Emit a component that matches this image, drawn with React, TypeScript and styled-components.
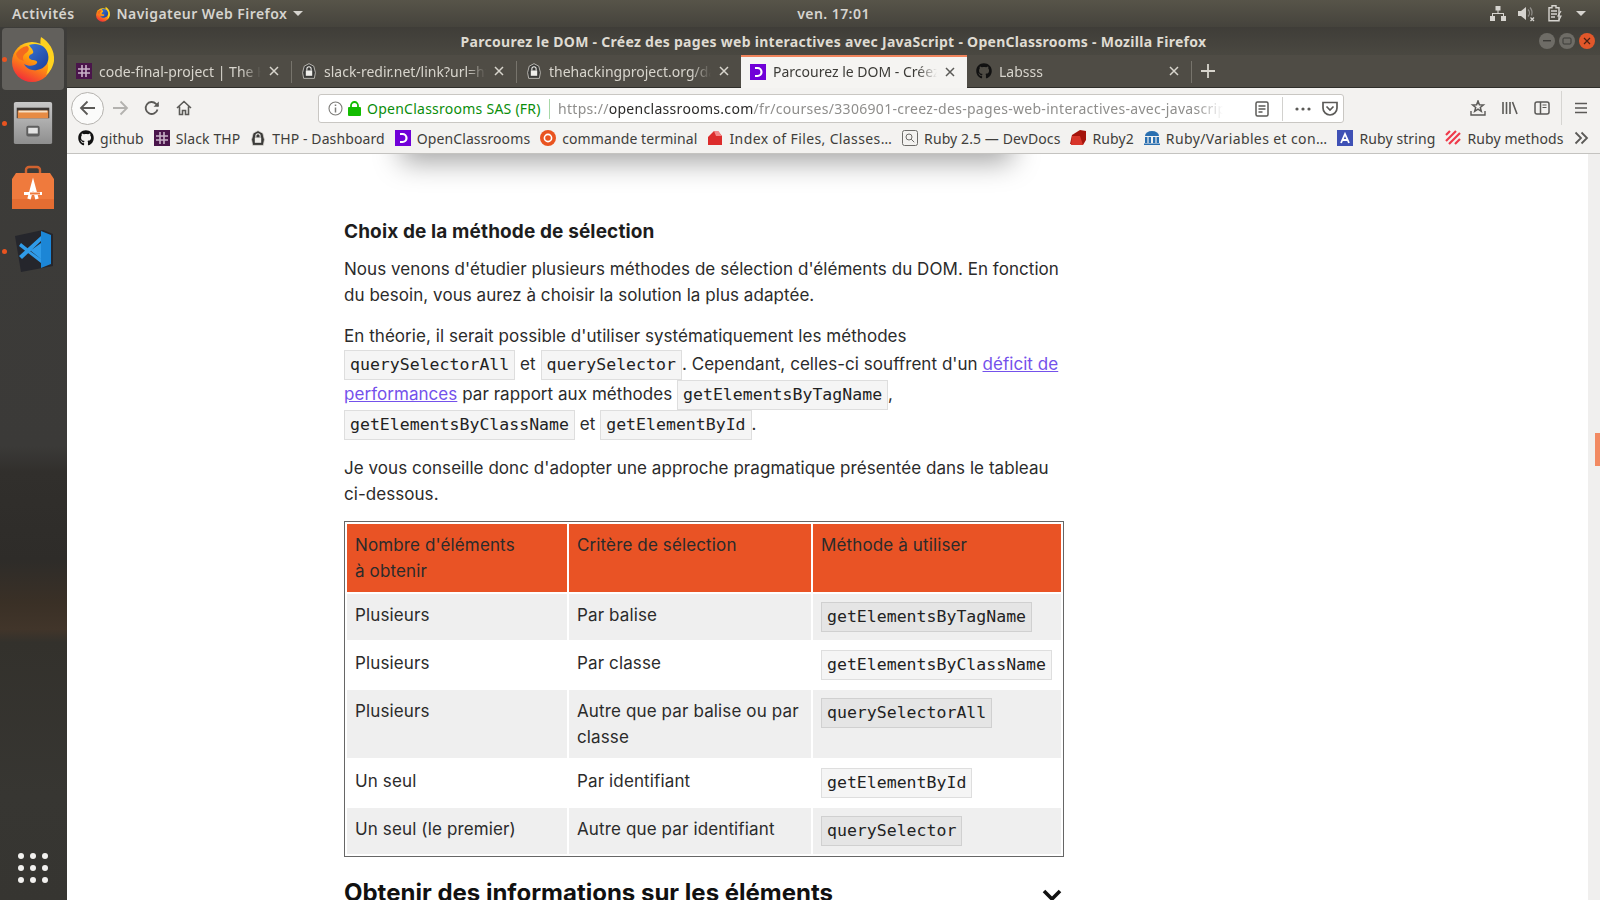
import React from 'react';
import styled, { createGlobalStyle } from 'styled-components';
import { FaGithub } from 'react-icons/fa';

const UI_FONT = '"Noto Sans", "Open Sans", sans-serif';
const PAGE_FONT = 'Inter, "Open Sans", sans-serif';
const MONO_FONT = '"DejaVu Sans Mono", "Liberation Mono", monospace';

const Global = createGlobalStyle`
  html, body { margin: 0; padding: 0; height: 100%; overflow: hidden; background: #fff; }
  #root { height: 100%; }
`;

const Screen = styled.div`
  width: 1600px;
  height: 900px;
  display: flex;
  flex-direction: column;
  overflow: hidden;
  font-family: ${UI_FONT};
`;

const TopBar = styled.div`
  height: 27px;
  flex: none;
  display: flex;
  align-items: center;
  justify-content: space-between;
  position: relative;
  padding: 0 12px;
  background: linear-gradient(#575449, #45433c);
  color: #d6d4cf;
  font-size: 14px;
  font-weight: 600;
  letter-spacing: 0.45px;
`;

const TopLeft = styled.div`
  display: flex;
  align-items: center;
`;

const AppMenu = styled.div`
  display: flex;
  align-items: center;
  gap: 6px;
  margin-left: 20px;
`;

const Caret = styled.span`
  width: 0;
  height: 0;
  border-left: 5px solid transparent;
  border-right: 5px solid transparent;
  border-top: 5px solid #d6d4cf;
`;

const Clock = styled.div`
  position: absolute;
  left: 67px;
  right: 0;
  text-align: center;
  pointer-events: none;
`;

const Tray = styled.div`
  display: flex;
  align-items: center;
  gap: 12px;
  margin-right: 2px;
`;

const Body = styled.div`
  flex: 1;
  display: flex;
  min-height: 0;
`;

const Dock = styled.div`
  width: 67px;
  box-sizing: border-box;
  flex: none;
  display: flex;
  flex-direction: column;
  align-items: center;
  position: relative;
  padding: 1px 1px 0 0;
  background: linear-gradient(#3d3c39 0, #3b3a38 48%, #312f2c 51%, #2e2c29 61%, #3a3026 66%, #41352a 69%, #33312c 70.5%, #373632 88%, #363531 100%);
`;

const DockItem = styled.div<{ $active?: boolean }>`
  width: 62px;
  height: 62px;
  margin-bottom: 2px;
  border-radius: 4px;
  display: flex;
  align-items: center;
  justify-content: center;
  position: relative;
  background: ${(p) => (p.$active ? '#62605c' : 'transparent')};
`;

const DockDot = styled.span`
  position: absolute;
  left: 0;
  top: 50%;
  margin-top: -2.5px;
  width: 5px;
  height: 5px;
  border-radius: 50%;
  background: #e95420;
`;

const GridDots = styled.div`
  margin-top: auto;
  margin-bottom: 17px;
  display: grid;
  grid-template-columns: repeat(3, 6px);
  gap: 6px;
`;

const GridDot = styled.span`
  width: 6px;
  height: 6px;
  border-radius: 50%;
  background: #f2f1ef;
`;

const Browser = styled.div`
  flex: 1;
  min-width: 0;
  display: flex;
  flex-direction: column;
  position: relative;
`;

const TitleBar = styled.div`
  height: 28px;
  flex: none;
  position: relative;
  display: flex;
  align-items: center;
  justify-content: center;
  background: linear-gradient(#3f3d38, #4a4841);
  color: #dfdbd2;
  font-size: 14px;
  font-weight: 700;
  letter-spacing: 0.28px;
`;

const WindowButtons = styled.div`
  position: absolute;
  right: 5px;
  top: 6px;
  display: flex;
  gap: 4px;
`;

const WinButton = styled.span<{ $close?: boolean }>`
  width: 16px;
  height: 16px;
  border-radius: 50%;
  display: flex;
  align-items: center;
  justify-content: center;
  background: ${(p) => (p.$close ? '#e2572a' : '#6e6c66')};
`;

const TabStrip = styled.div`
  height: 32px;
  flex: none;
  display: flex;
  align-items: stretch;
  background: #4f4c45;
  border-bottom: 1px solid #2f2e2a;
`;

const Tab = styled.div<{ $active?: boolean; $w: number }>`
  width: ${(p) => p.$w}px;
  flex: none;
  box-sizing: border-box;
  display: flex;
  align-items: center;
  gap: 7px;
  padding: 0 11px 2px 9px;
  position: relative;
  color: ${(p) => (p.$active ? '#3c3b37' : '#d8d5cd')};
  background: ${(p) => (p.$active ? '#f5f4f2' : 'transparent')};
  border-top: ${(p) => (p.$active ? '2px solid #f0845c' : '2px solid transparent')};
  font-size: 14px;
  margin-bottom: ${(p) => (p.$active ? '-1px' : '0')};
`;

const TabLabel = styled.span`
  flex: 1;
  min-width: 0;
  white-space: nowrap;
  overflow: hidden;
  -webkit-mask-image: linear-gradient(90deg, #000 88%, transparent 100%);
  mask-image: linear-gradient(90deg, #000 88%, transparent 100%);
`;

const TabSep = styled.span`
  width: 1px;
  margin: 6px 0 4px;
  flex: none;
  background: #77746c;
`;

const PlusButton = styled.span`
  width: 32px;
  display: flex;
  align-items: center;
  justify-content: center;
`;

const NavBar = styled.div`
  height: 35px;
  flex: none;
  box-sizing: border-box;
  display: flex;
  align-items: center;
  background: #f3f2f0;
  padding: 5px 0 0 4px;
  position: relative;
  z-index: 3;
`;

const BackCircle = styled.span`
  width: 33px;
  height: 33px;
  box-sizing: border-box;
  border: 1px solid #b5b3af;
  border-radius: 50%;
  background: #fbfbfa;
  display: flex;
  align-items: center;
  justify-content: center;
  flex: none;
`;

const NavIcon = styled.span`
  width: 32px;
  flex: none;
  display: flex;
  align-items: center;
  justify-content: center;
`;

const UrlBar = styled.div`
  position: absolute;
  left: 251px;
  width: 1026px;
  top: 6px;
  height: 29px;
  box-sizing: border-box;
  border: 1px solid #c9c7c3;
  border-radius: 3px;
  background: #fff;
  display: flex;
  align-items: center;
  font-size: 14px;
  overflow: hidden;
`;

const Identity = styled.div`
  display: flex;
  align-items: center;
  gap: 6px;
  padding-left: 9px;
  flex: none;
  width: 230px;
  box-sizing: border-box;
  height: 100%;
  color: #0a8d0a;
  white-space: nowrap;
  letter-spacing: 0.25px;
`;

const IdentitySep = styled.span`
  width: 1px;
  height: 20px;
  flex: none;
  background: #a8d8a8;
  margin-right: 8px;
`;

const UrlText = styled.div`
  flex: 1;
  min-width: 0;
  margin-right: 32px;
  white-space: nowrap;
  overflow: hidden;
  color: #8f8e8c;
  letter-spacing: 0.3px;
  -webkit-mask-image: linear-gradient(90deg, #000 96%, transparent 100%);
  mask-image: linear-gradient(90deg, #000 96%, transparent 100%);
  b {
    font-weight: 400;
    color: #2b2a29;
  }
`;

const UrlActions = styled.div`
  flex: none;
  display: flex;
  align-items: center;
  height: 100%;
  padding: 0 5px 0 0;
`;

const UrlDivider = styled.span`
  width: 1px;
  height: 24px;
  background: #d2d1ce;
  margin: 0 12px 0 13px;
`;

const PocketGap = styled.span`
  width: 11px;
`;

const ToolGroup = styled.div`
  margin-left: auto;
  padding-right: 3px;
  display: flex;
  align-items: center;
  height: 100%;
`;

const ToolDivider = styled.span`
  width: 1px;
  height: 34px;
  background: #d6d5d2;
  margin: 0 3px;
`;

const Bookmarks = styled.div`
  height: 31px;
  flex: none;
  box-sizing: border-box;
  display: flex;
  align-items: center;
  background: #f3f2f0;
  border-bottom: 1px solid #c4c3c0;
  padding-left: 11px;
  font-size: 14px;
  letter-spacing: 0.1px;
  color: #3f3e3b;
  position: relative;
  z-index: 2;
`;

const Bookmark = styled.div<{ $wide?: boolean }>`
  display: flex;
  align-items: center;
  gap: 6px;
  margin-right: 10px;
  white-space: nowrap;
  letter-spacing: ${(p) => (p.$wide ? '0.38px' : 'inherit')};
`;

const Favicon = styled.span<{ $bg?: string; $round?: boolean }>`
  width: 16px;
  height: 16px;
  flex: none;
  display: flex;
  align-items: center;
  justify-content: center;
  background: ${(p) => p.$bg ?? 'transparent'};
  border-radius: ${(p) => (p.$round ? '50%' : '0')};
`;

const Overflow = styled.span`
  position: absolute;
  right: 11px;
  top: 7px;
`;

const PageArea = styled.div`
  flex: 1;
  min-height: 0;
  display: flex;
  position: relative;
  overflow: hidden;
  background: #fff;
`;

const ImageShadow = styled.div`
  position: absolute;
  left: 336px;
  width: 607px;
  top: -40px;
  height: 40px;
  box-shadow: 0 6px 28px 2px rgba(0, 0, 0, 0.36);
`;

const Content = styled.div`
  width: 720px;
  margin-left: 277px;
  flex: none;
  color: #2b2b2b;
  font-family: ${PAGE_FONT};
  font-size: 17px;
  letter-spacing: 0.05px;
  line-height: 26px;
  padding-top: 65px;
`;

const SubTitle = styled.h3`
  margin: 0 0 11px;
  font-size: 19px;
  letter-spacing: 0.12px;
  line-height: 26px;
  font-weight: 700;
  color: #1d1d1d;
`;

const Para = styled.p`
  margin: 0 0 14px;
`;

const CodePara = styled.p`
  margin: 15px 0;
  line-height: 26px;
`;

const FirstLine = styled.span`
  display: block;
  margin-bottom: 1px;
`;

const Code = styled.code`
  display: inline-block;
  font-family: ${MONO_FONT};
  font-size: 16.55px;
  letter-spacing: 0;
  line-height: 24px;
  padding: 2px 5px;
  border: 1px solid rgba(0, 0, 0, 0.09);
  background: rgba(0, 0, 0, 0.04);
  color: #222;
`;

const Link = styled.a`
  color: #7451eb;
  text-decoration: underline;
`;

const Table = styled.table`
  width: 100%;
  box-sizing: border-box;
  border: 1px solid #666;
  border-collapse: separate;
  border-spacing: 2px;
  table-layout: fixed;
  margin-top: 14px;
  letter-spacing: 0.13px;
`;

const HeadCell = styled.th`
  background: #e95325;
  color: #2b2b2b;
  font-weight: 400;
  text-align: left;
  vertical-align: top;
  padding: 8px 9px 8px 8px;
`;

const Row = styled.tr<{ $odd?: boolean }>`
  background: ${(p) => (p.$odd ? '#efefef' : '#fff')};
`;

const Cell = styled.td`
  vertical-align: top;
  padding: 8px 9px 8px 8px;
`;

const CodeCell = styled.td`
  vertical-align: top;
  padding: 8px 9px 8px 8px;
  white-space: nowrap;
  ${Code} {
    vertical-align: top;
  }
`;

const NextTitle = styled.div`
  display: flex;
  justify-content: space-between;
  align-items: center;
  margin-top: 23px;
  font-size: 24px;
  letter-spacing: 0;
  font-weight: 700;
  color: #111;
`;

const Chevron = styled.svg`
  flex: none;
  margin: 6px 2px 0 0;
`;

const ScrollTrack = styled.div`
  width: 12px;
  flex: none;
  margin-left: auto;
  position: relative;
  background: #f0efee;
`;

const ScrollThumb = styled.div`
  position: absolute;
  right: 0;
  top: 279px;
  width: 5px;
  height: 33px;
  background: #f28a62;
`;

const ic = '#5b5a57';

const SlackIcon = () => (
  <Favicon $bg="#4a154b">
    <svg width="12" height="12" viewBox="0 0 12 12" stroke="#c9b2c9" strokeWidth="1.6">
      <path d="M4 0v12M8 0v12M0 4h12M0 8h12" />
    </svg>
  </Favicon>
);

const LockGhost = () => (
  <Favicon>
    <svg width="16" height="16" viewBox="0 0 14 15">
      <path d="M7 .6 2.5 3 1 9l1 5.4h10L13 9l-1.5-6z" fill="#3a3a38" stroke="#d9d7d1" strokeWidth=".7" />
      <rect x="4" y="7" width="6" height="5" fill="#efeeea" />
      <path d="M5 7V5.5a2 2 0 0 1 4 0V7" fill="none" stroke="#efeeea" />
    </svg>
  </Favicon>
);

const OcIcon = () => (
  <Favicon $bg="#7000d8">
    <svg width="12" height="12" viewBox="0 0 12 12" fill="none">
      <path d="M3 2h2.5a4 4 0 0 1 0 8H3" stroke="#fff" strokeWidth="2.2" />
    </svg>
  </Favicon>
);

const CloseX = ({ color }: { color: string }) => (
  <svg width="12" height="12" viewBox="0 0 12 12" stroke={color} strokeWidth="1.5" style={{ flex: 'none' }}>
    <path d="M2 2l8 8M10 2l-8 8" />
  </svg>
);

const FirefoxLogo = ({ size }: { size: number }) => (
  <svg width={size} height={size} viewBox="0 0 48 48">
    <defs>
      <linearGradient id={`ffa${size}`} x1="0.7" y1="0" x2="0.2" y2="1">
        <stop offset="0" stopColor="#ffe226" />
        <stop offset="0.45" stopColor="#ff980e" />
        <stop offset="1" stopColor="#f0213f" />
      </linearGradient>
      <linearGradient id={`ffb${size}`} x1="0" y1="0" x2="1" y2="1">
        <stop offset="0" stopColor="#3d79d8" />
        <stop offset="1" stopColor="#1b3f9a" />
      </linearGradient>
    </defs>
    <circle cx="23" cy="27" r="20" fill={`url(#ffa${size})`} />
    <path d="M32 2c8 5 14 13 13 24-1 6-4 11-8 14 3-6 3-13-1-19-3-5-6-11-4-19z" fill="#ffd21f" />
    <path d="M20 10c8-3 17 0 19 9 2 8-3 15-11 16-6 1-11-2-13-6 5 3 11 2 13-1 1-2-2-3-5-3-3-1-4-3-2-5 2-1 4-2 3-4-1-3-3-4-4-6z" fill={`url(#ffb${size})`} />
    <path d="M7 19c2-4 6-7 11-8 3 2 2 5-1 7-3 2-4 5-2 8-4-1-7-3-8-7z" fill="#f46a1e" />
  </svg>
);

const FilesIcon = () => (
  <svg width="42" height="44" viewBox="0 0 42 46">
    <defs>
      <linearGradient id="cab" x1="0" y1="0" x2="0" y2="1">
        <stop offset="0" stopColor="#c8c8c8" />
        <stop offset="1" stopColor="#8e8e8e" />
      </linearGradient>
    </defs>
    <rect x="1" y="1" width="40" height="44" rx="2" fill="url(#cab)" />
    <rect x="4" y="7" width="34" height="11" fill="#3a3532" />
    <rect x="5" y="10" width="32" height="8" fill="#e78b44" />
    <rect x="6" y="10" width="30" height="2" fill="#f7e0c4" />
    <rect x="14" y="26" width="14" height="11" rx="2" fill="#5f5f5f" />
    <rect x="16" y="28" width="10" height="6" fill="#e4e4e4" />
  </svg>
);

const StoreIcon = () => (
  <svg width="42" height="44" viewBox="0 0 42 44">
    <path d="M14 9V5a3 3 0 0 1 3-3h8a3 3 0 0 1 3 3v4" fill="none" stroke="#d0622f" strokeWidth="2.4" />
    <path d="M4 8h34l4 6v30H0V14z" fill="#ef7a3d" />
    <rect x="0" y="34" width="42" height="10" fill="#e56d32" />
    <path d="M17 34l4-15 4 15" fill="none" stroke="#fff" strokeWidth="3.4" />
    <rect x="12" y="27" width="18" height="3" fill="#fff" />
    <rect x="18" y="27.5" width="10" height="2" fill="#ef7a3d" />
  </svg>
);

const VsCodeIcon = () => (
  <svg width="41" height="42" viewBox="0 0 41 42">
    <path d="M2 6 30 0l10 4v32l-32 6z" fill="#25262c" />
    <path d="M28 1l10 4v29l-10 4z" fill="#1c86d6" />
    <path d="M28 13 17 21l11 8zM8 13l20 16v4L6 16zM6 26l22-20v5L9 29z" fill="#2f9be8" />
  </svg>
);

const Tools = {
  back: (
    <svg width="18" height="18" viewBox="0 0 18 18" fill="none" stroke={ic} strokeWidth="1.8">
      <path d="M16 9H2M8.5 2.5 2 9l6.5 6.5" />
    </svg>
  ),
  forward: (
    <svg width="18" height="18" viewBox="0 0 18 18" fill="none" stroke="#b3b2af" strokeWidth="1.8">
      <path d="M2 9h14M9.5 2.5 16 9l-6.5 6.5" />
    </svg>
  ),
  reload: (
    <svg width="16" height="16" viewBox="0 0 16 16" fill="none" stroke={ic} strokeWidth="1.8">
      <path d="M13.5 9.5A6 6 0 1 1 12 3.8L14 6" />
      <path d="M14.8 1.5v5.2H9.6z" fill={ic} stroke="none" />
    </svg>
  ),
  home: (
    <svg width="16" height="16" viewBox="0 0 16 16" fill="none" stroke={ic} strokeWidth="1.6">
      <path d="M1 8 8 1.5 15 8M3.5 6.5V14.5h3v-4h3v4h3V6.5" />
    </svg>
  ),
  reader: (
    <svg width="14" height="16" viewBox="0 0 14 16" fill="none" stroke={ic} strokeWidth="1.5">
      <rect x="1" y="1" width="12" height="14" rx="1.5" />
      <path d="M3.5 5h7M3.5 8h7M3.5 11h4" />
    </svg>
  ),
  dots: (
    <svg width="16" height="4" viewBox="0 0 16 4" fill={ic}>
      <circle cx="2" cy="2" r="1.6" />
      <circle cx="8" cy="2" r="1.6" />
      <circle cx="14" cy="2" r="1.6" />
    </svg>
  ),
  pocket: (
    <svg width="16" height="15" viewBox="0 0 16 15" fill="none" stroke={ic} strokeWidth="1.7">
      <path d="M1 1.5h14v5.5a7 7 0 0 1-14 0z" />
      <path d="M4.5 5.5 8 9l3.5-3.5" />
    </svg>
  ),
  star: (
    <svg width="16" height="16" viewBox="0 0 16 16" fill="none" stroke={ic} strokeWidth="1.5">
      <path d="M8 1 9.4 4.8l4 .2-3.1 2.5 1 3.8L8 9.2l-3.3 2.1 1-3.8L2.6 5l4-.2z" />
      <path d="M1 11v4h14v-4" strokeWidth="1.4" />
    </svg>
  ),
  library: (
    <svg width="16" height="14" viewBox="0 0 16 14" fill="none" stroke={ic} strokeWidth="1.6">
      <path d="M1 1v12M4.5 1v12M8 1v12M10.5 1l4.5 12" />
    </svg>
  ),
  sidebar: (
    <svg width="16" height="14" viewBox="0 0 16 14" fill="none" stroke={ic} strokeWidth="1.5">
      <rect x="1" y="1" width="14" height="12" rx="2" />
      <path d="M6.5 1v12" />
      <path d="M8.5 4h4M8.5 6.5h4" strokeWidth="1" />
    </svg>
  ),
  menu: (
    <svg width="14" height="12" viewBox="0 0 14 12" stroke={ic} strokeWidth="1.7">
      <path d="M1 1.5h12M1 6h12M1 10.5h12" />
    </svg>
  ),
};

const App = () => {
  return (
    <Screen>
      <Global />
      <TopBar>
        <Clock>ven. 17:01</Clock>
        <TopLeft>
          <span>Activités</span>
          <AppMenu>
            <FirefoxLogo size={16} />
            <span>Navigateur Web Firefox</span>
            <Caret />
          </AppMenu>
        </TopLeft>
        <Tray>
          <svg width="16" height="15" viewBox="0 0 16 15" fill="#d6d4cf">
            <rect x="5.5" y="0" width="5" height="4.5" />
            <rect x="0" y="10" width="5" height="5" />
            <rect x="11" y="10" width="5" height="5" />
            <path d="M7.5 4h1v3h5.5v3h-1V8H3v2H2V7h5.5z" />
          </svg>
          <svg width="18" height="16" viewBox="0 0 18 16" fill="#d6d4cf">
            <path d="M0 5h3l5-4v13l-5-4H0z" />
            <path d="M10 3.5a5 5 0 0 1 0 7M12 1.5a8 8 0 0 1 1.5 8" fill="none" stroke="#8f8d88" strokeWidth="1.3" />
            <path d="M12.5 11.5l3.5 3.5M16 11.5l-3.5 3.5" stroke="#d6d4cf" strokeWidth="1.3" />
          </svg>
          <svg width="16" height="17" viewBox="0 0 16 17" fill="none" stroke="#d6d4cf" strokeWidth="1.4">
            <path d="M4 .8h4v2h3v13H1v-13h3z" fill="none" />
            <path d="M3 6h6M3 9h6M3 12h4" />
            <path d="M13 6l-3 5h3l-2 4" strokeWidth="1.2" />
          </svg>
          <Caret />
        </Tray>
      </TopBar>
      <Body>
        <Dock>
          <DockItem $active>
            <DockDot />
            <FirefoxLogo size={48} />
          </DockItem>
          <DockItem>
            <DockDot />
            <FilesIcon />
          </DockItem>
          <DockItem>
            <StoreIcon />
          </DockItem>
          <DockItem>
            <DockDot />
            <VsCodeIcon />
          </DockItem>
          <GridDots>
            {Array.from({ length: 9 }).map((_, i) => <GridDot key={i} />)}
          </GridDots>
        </Dock>
        <Browser>
          <TitleBar>
            <div>Parcourez le DOM - Créez des pages web interactives avec JavaScript - OpenClassrooms - Mozilla Firefox</div>
            <WindowButtons>
              <WinButton>
                <svg width="8" height="2" viewBox="0 0 8 2"><rect width="8" height="1.4" fill="#3b3a36" /></svg>
              </WinButton>
              <WinButton>
                <svg width="10" height="8" viewBox="0 0 10 8" fill="none" stroke="#3b3a36"><rect x="1" y="1" width="8" height="6" rx="1" /></svg>
              </WinButton>
              <WinButton $close>
                <svg width="8" height="8" viewBox="0 0 8 8" stroke="#4a2012" strokeWidth="1.2"><path d="M1 1l6 6M7 1 1 7" /></svg>
              </WinButton>
            </WindowButtons>
          </TitleBar>
          <TabStrip>
            <Tab $w={224}>
              <SlackIcon />
              <TabLabel>code-final-project | The Hacking</TabLabel>
              <CloseX color="#d8d5cd" />
            </Tab>
            <TabSep />
            <Tab $w={224}>
              <LockGhost />
              <TabLabel>slack-redir.net/link?url=https</TabLabel>
              <CloseX color="#d8d5cd" />
            </Tab>
            <TabSep />
            <Tab $w={224}>
              <LockGhost />
              <TabLabel>thehackingproject.org/dashboard</TabLabel>
              <CloseX color="#d8d5cd" />
            </Tab>
            <Tab $w={226} $active>
              <OcIcon />
              <TabLabel>Parcourez le DOM - Créez des pages</TabLabel>
              <CloseX color="#5b5a57" />
            </Tab>
            <Tab $w={224}>
              <FaGithub size={16} color="#111" style={{ flex: 'none' }} />
              <TabLabel>Labsss</TabLabel>
              <CloseX color="#d8d5cd" />
            </Tab>
            <TabSep />
            <PlusButton>
              <svg width="14" height="14" viewBox="0 0 14 14" stroke="#d8d5cd" strokeWidth="1.8"><path d="M7 0v14M0 7h14" /></svg>
            </PlusButton>
          </TabStrip>
          <NavBar>
            <BackCircle>{Tools.back}</BackCircle>
            <NavIcon>{Tools.forward}</NavIcon>
            <NavIcon>{Tools.reload}</NavIcon>
            <NavIcon>{Tools.home}</NavIcon>
            <UrlBar>
              <Identity>
                <svg width="15" height="15" viewBox="0 0 15 15" fill="none" stroke="#7d7c79" strokeWidth="1.1" style={{ flex: 'none' }}>
                  <circle cx="7.5" cy="7.5" r="6.5" />
                  <path d="M7.5 6.5v5M7.5 3.5v1.6" strokeWidth="1.5" />
                </svg>
                <svg width="13" height="15" viewBox="0 0 13 15" style={{ flex: 'none', marginLeft: -1 }}>
                  <rect x="0" y="6" width="13" height="9" rx="1" fill="#12bc00" />
                  <path d="M3 7V4.5a3.5 3.5 0 0 1 7 0V7" fill="none" stroke="#12bc00" strokeWidth="1.8" />
                </svg>
                <span>OpenClassrooms SAS (FR)</span>
              </Identity>
              <IdentitySep />
              <UrlText>https://<b>openclassrooms.com</b>/fr/courses/3306901-creez-des-pages-web-interactives-avec-javascript/3306901</UrlText>
              <UrlActions>
                {Tools.reader}
                <UrlDivider />
                {Tools.dots}
                <PocketGap />
                {Tools.pocket}
              </UrlActions>
            </UrlBar>
            <ToolGroup>
              <NavIcon>{Tools.star}</NavIcon>
              <NavIcon>{Tools.library}</NavIcon>
              <NavIcon>{Tools.sidebar}</NavIcon>
              <ToolDivider />
              <NavIcon>{Tools.menu}</NavIcon>
            </ToolGroup>
          </NavBar>
          <Bookmarks>
            <Bookmark><FaGithub size={16} color="#111" /><span>github</span></Bookmark>
            <Bookmark><SlackIcon /><span>Slack THP</span></Bookmark>
            <Bookmark><LockGhost /><span>THP - Dashboard</span></Bookmark>
            <Bookmark><OcIcon /><span>OpenClassrooms</span></Bookmark>
            <Bookmark>
              <Favicon $bg="#e95420" $round>
                <svg width="12" height="12" viewBox="0 0 12 12" fill="none" stroke="#fff" strokeWidth="1.6"><circle cx="6" cy="6" r="3.6" /></svg>
              </Favicon>
              <span>commande terminal</span>
            </Bookmark>
            <Bookmark $wide>
              <Favicon>
                <svg width="16" height="16" viewBox="0 0 16 16"><path d="M1 15V7l6-6h4l4 5v9z" fill="#dc2c2c" /><path d="M7 1h4l4 5H9z" fill="#f28a8a" /></svg>
              </Favicon>
              <span>Index of Files, Classes…</span>
            </Bookmark>
            <Bookmark>
              <Favicon>
                <svg width="16" height="16" viewBox="0 0 16 16" fill="none" stroke="#6d6c69"><rect x="0.5" y="0.5" width="15" height="15" rx="2" /><circle cx="7" cy="7" r="3" /><path d="M9.2 9.2l3 3" /></svg>
              </Favicon>
              <span>Ruby 2.5 — DevDocs</span>
            </Bookmark>
            <Bookmark>
              <Favicon>
                <svg width="16" height="16" viewBox="0 0 16 16"><path d="M0 14 2 5l8-5 6 1v9l-3 5z" fill="#a5140c" /><path d="M2 6h8l3 9H1z" fill="#d8352a" /></svg>
              </Favicon>
              <span>Ruby2</span>
            </Bookmark>
            <Bookmark $wide>
              <Favicon>
                <svg width="16" height="14" viewBox="0 0 16 14" fill="#2a6fb0"><path d="M1 5a7 5 0 0 1 14 0z" /><path d="M1 6h2.4v6H1zM4.6 6H7v6H4.6zM9 6h2.4v6H9zM12.6 6H15v6h-2.4zM0 12.4h16V14H0z" /></svg>
              </Favicon>
              <span>Ruby/Variables et con…</span>
            </Bookmark>
            <Bookmark>
              <Favicon $bg="#3f51b5">
                <svg width="12" height="12" viewBox="0 0 12 12" fill="none" stroke="#fff" strokeWidth="1.8"><path d="M2 11 6 2l4 9M3.5 8h5" /></svg>
              </Favicon>
              <span>Ruby string</span>
            </Bookmark>
            <Bookmark>
              <Favicon>
                <svg width="16" height="16" viewBox="0 0 16 16" stroke="#ef3a4a" strokeWidth="2.2"><path d="M1 5l4-4M1 11 11 1M4 14 15 3M10 14l5-5" /></svg>
              </Favicon>
              <span>Ruby methods</span>
            </Bookmark>
            <Overflow>
              <svg width="15" height="14" viewBox="0 0 15 14" fill="none" stroke={ic} strokeWidth="1.8"><path d="M1.5 1.5 7 7l-5.5 5.5M7.5 1.5 13 7l-5.5 5.5" /></svg>
            </Overflow>
          </Bookmarks>
          <PageArea>
            <ImageShadow />
            <Content>
              <SubTitle>Choix de la méthode de sélection</SubTitle>
              <Para>Nous venons d'étudier plusieurs méthodes de sélection d'éléments du DOM. En fonction du besoin, vous aurez à choisir la solution la plus adaptée.</Para>
              <CodePara>
                <FirstLine>En théorie, il serait possible d'utiliser systématiquement les méthodes</FirstLine>
                <Code>querySelectorAll</Code> et <Code>querySelector</Code>. Cependant, celles-ci souffrent d'un <Link>déficit de performances</Link> par rapport aux méthodes <Code>getElementsByTagName</Code>, <Code>getElementsByClassName</Code> et <Code>getElementById</Code>.
              </CodePara>
              <Para>Je vous conseille donc d'adopter une approche pragmatique présentée dans le tableau ci-dessous.</Para>
              <Table>
                <colgroup>
                  <col style={{ width: 220 }} />
                  <col style={{ width: 242 }} />
                  <col />
                </colgroup>
                <thead>
                  <tr>
                    <HeadCell>Nombre d'éléments à&nbsp;obtenir</HeadCell>
                    <HeadCell>Critère de sélection</HeadCell>
                    <HeadCell>Méthode à utiliser</HeadCell>
                  </tr>
                </thead>
                <tbody>
                  <Row $odd>
                    <Cell>Plusieurs</Cell>
                    <Cell>Par balise</Cell>
                    <CodeCell><Code>getElementsByTagName</Code></CodeCell>
                  </Row>
                  <Row>
                    <Cell>Plusieurs</Cell>
                    <Cell>Par classe</Cell>
                    <CodeCell><Code>getElementsByClassName</Code></CodeCell>
                  </Row>
                  <Row $odd>
                    <Cell>Plusieurs</Cell>
                    <Cell>Autre que par balise ou par classe</Cell>
                    <CodeCell><Code>querySelectorAll</Code></CodeCell>
                  </Row>
                  <Row>
                    <Cell>Un seul</Cell>
                    <Cell>Par identifiant</Cell>
                    <CodeCell><Code>getElementById</Code></CodeCell>
                  </Row>
                  <Row $odd>
                    <Cell>Un seul (le premier)</Cell>
                    <Cell>Autre que par identifiant</Cell>
                    <CodeCell><Code>querySelector</Code></CodeCell>
                  </Row>
                </tbody>
              </Table>
              <NextTitle>
                <span>Obtenir des informations sur les éléments</span>
                <Chevron width="20" height="14" viewBox="0 0 20 14" fill="none" stroke="#111" strokeWidth="3.6"><path d="M2 2l8 8 8-8" /></Chevron>
              </NextTitle>
            </Content>
            <ScrollTrack><ScrollThumb /></ScrollTrack>
          </PageArea>
        </Browser>
      </Body>
    </Screen>
  );
};

export default App;
